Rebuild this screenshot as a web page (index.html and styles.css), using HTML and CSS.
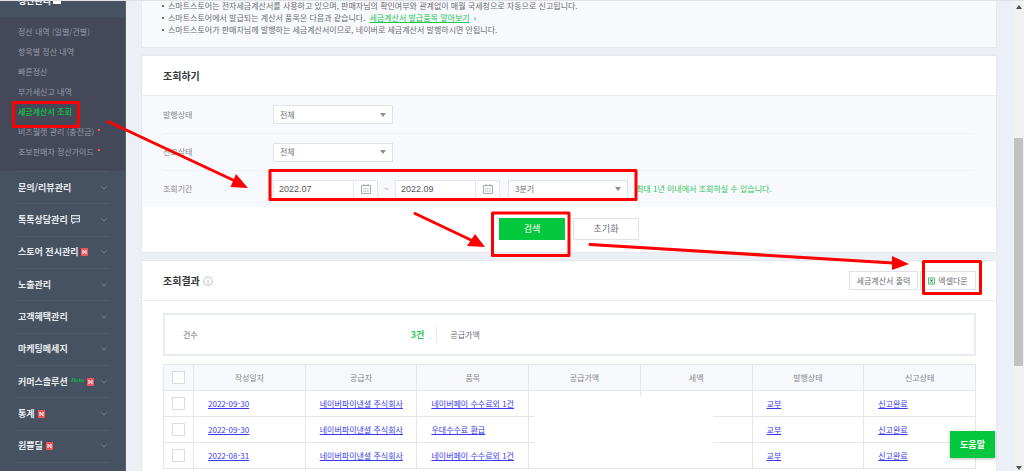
FILE: index.html
```html
<!DOCTYPE html>
<html lang="ko">
<head>
<meta charset="utf-8">
<title>세금계산서 조회</title>
<link rel="stylesheet" href="styles.css">
</head>
<body>
<svg class="symbols" aria-hidden="true">
  <symbol id="chevron" viewBox="0 0 6 4"><path d="M.5 .5 3 3 5.500 .5" fill="none" stroke="#74808e" stroke-width="1"/></symbol>
  <symbol id="new" viewBox="0 0 7 8"><rect width="7" height="8" fill="#f0525b"/><path d="M2 6V2.200L5 5.800V2" fill="none" stroke="#fff" stroke-width="1"/></symbol>
  <symbol id="calendar" viewBox="0 0 10 10"><path d="M.5 1.500h9v8h-9zM3 0v2.500M7 0v2.500" fill="none" stroke="#a9adb3"/><path d="M2 4.500h6M2 6h6M2 7.500h6" stroke="#b9bdc3" stroke-width=".8" stroke-dasharray="1.200 .6"/></symbol>
</svg>
<div class="app">
  <nav class="sidebar">
    <div class="current">정산관리 <span class="mark"></span></div>
    <ul class="submenu">
      <li><a href="#">정산 내역 (일별/건별)</a></li>
      <li><a href="#">항목별 정산 내역</a></li>
      <li><a href="#">빠른정산</a></li>
      <li><a href="#">부가세신고 내역</a></li>
      <li><a href="#" class="active">세금계산서 조회</a></li>
      <li><a href="#">비즈월렛 관리 (충전금)</a><i class="dot"></i></li>
      <li><a href="#">초보판매자 정산가이드</a><i class="dot"></i></li>
    </ul>
    <ul class="menu">
      <li><a href="#">문의/리뷰관리</a><svg class="chevron"><use href="#chevron"/></svg></li>
      <li><a href="#">톡톡상담관리</a><svg class="talk" viewBox="0 0 8 8"><path d="M.5 .5h7v5.500H3.200L1.500 7.500V6h-1zM1 3.200h6" fill="none" stroke="#d5dae0"/></svg><svg class="chevron"><use href="#chevron"/></svg></li>
      <li><a href="#">스토어 전시관리</a><svg class="new"><use href="#new"/></svg><svg class="chevron"><use href="#chevron"/></svg></li>
      <li><a href="#">노출관리</a><svg class="chevron"><use href="#chevron"/></svg></li>
      <li><a href="#">고객혜택관리</a><svg class="chevron"><use href="#chevron"/></svg></li>
      <li><a href="#">마케팅메세지</a><svg class="chevron"><use href="#chevron"/></svg></li>
      <li><a href="#">커머스솔루션</a><span class="beta">Beta</span><svg class="new"><use href="#new"/></svg><svg class="chevron"><use href="#chevron"/></svg></li>
      <li><a href="#">통계</a><svg class="new"><use href="#new"/></svg><svg class="chevron"><use href="#chevron"/></svg></li>
      <li><a href="#">원쁠딜</a><svg class="new"><use href="#new"/></svg><svg class="chevron"><use href="#chevron"/></svg></li>
    </ul>
  </nav>

  <main class="content">
    <section class="panel notice">
      <ul>
        <li>스마트스토어는 전자세금계산서를 사용하고 있으며, 판매자님의 확인여부와 관계없이 매월 국세청으로 자동으로 신고됩니다.</li>
        <li>스마트스토어에서 발급되는 계산서 품목은 다음과 같습니다. <a href="#">세금계산서 발급품목 알아보기</a><b>›</b></li>
        <li>스마트스토어가 판매자님께 발행하는 세금계산서이므로, 네이버로 세금계산서 발행하시면 안됩니다.</li>
      </ul>
    </section>

    <form class="panel">
      <header class="panel-head"><h2>조회하기</h2></header>
      <div class="fields">
        <div class="field">
          <label for="issue">발행상태</label>
          <select id="issue"><option>전체</option></select>
        </div>
        <div class="field">
          <label for="report">신고상태</label>
          <select id="report"><option>전체</option></select>
        </div>
        <div class="field">
          <label for="from">조회기간</label>
          <div class="date"><input id="from" type="text" value="2022.07"><button type="button" aria-label="시작월 선택"><svg><use href="#calendar"/></svg></button></div>
          <span class="tilde">~</span>
          <div class="date"><input type="text" value="2022.09" aria-label="종료월"><button type="button" aria-label="종료월 선택"><svg><use href="#calendar"/></svg></button></div>
          <select class="quarter" aria-label="분기"><option>3분기</option></select>
          <span class="hint">최대 1년 이내에서 조회하실 수 있습니다.</span>
        </div>
      </div>
      <div class="actions">
        <button type="button" class="primary">검색</button>
        <button type="reset">초기화</button>
      </div>
    </form>

    <section class="panel results">
      <header class="panel-head">
        <h2>조회결과</h2>
        <svg class="info" viewBox="0 0 10 10"><circle cx="5" cy="5" r="4.300" fill="none" stroke="#b4b8be" stroke-width=".9"/><path d="M5 2.300v1M5 4.300v3.400" stroke="#b4b8be"/></svg>
        <div class="tools">
          <button type="button">세금계산서 출력</button>
          <button type="button"><svg viewBox="0 0 8 8"><path d="M.5 .5h7v7h-7z" fill="#fff" stroke="#2fae57"/><path d="M2.500 2.300l3 3.500M5.500 2.300l-3 3.500" stroke="#17873c" stroke-width="1.200"/></svg>엑셀다운</button>
        </div>
      </header>
      <div class="results-body">
        <dl class="summary">
          <div><dt>건수</dt><dd>3건</dd></div>
          <div><dt>공급가액</dt><dd></dd></div>
          <div></div>
        </dl>
        <div class="table-wrap">
          <table>
            <thead>
              <tr><th class="check"><input type="checkbox" aria-label="전체 선택"></th><th>작성일자</th><th>공급자</th><th>품목</th><th>공급가액</th><th>세액</th><th>발행상태</th><th>신고상태</th></tr>
            </thead>
            <tbody>
              <tr><td class="check"><input type="checkbox" aria-label="선택"></td><td><a href="#">2022-09-30</a></td><td><a href="#">네이버파이낸셜 주식회사</a></td><td><a href="#">네이버페이 수수료외 1건</a></td><td></td><td></td><td><a href="#">교부</a></td><td><a href="#">신고완료</a></td></tr>
              <tr><td class="check"><input type="checkbox" aria-label="선택"></td><td><a href="#">2022-09-30</a></td><td><a href="#">네이버파이낸셜 주식회사</a></td><td><a href="#">우대수수료 환급</a></td><td></td><td></td><td><a href="#">교부</a></td><td><a href="#">신고완료</a></td></tr>
              <tr><td class="check"><input type="checkbox" aria-label="선택"></td><td><a href="#">2022-08-31</a></td><td><a href="#">네이버파이낸셜 주식회사</a></td><td><a href="#">네이버페이 수수료외 1건</a></td><td></td><td></td><td><a href="#">교부</a></td><td><a href="#">신고완료</a></td></tr>
            </tbody>
          </table>
          <div class="redaction"></div>
        </div>
      </div>
    </section>
  </main>

  <div class="scrollbar" aria-hidden="true">
    <svg viewBox="0 0 6 4"><path d="M0 4 3 0 6 4z" fill="#4a4f57"/></svg>
    <div class="thumb"></div>
    <svg viewBox="0 0 6 4"><path d="M0 0 3 4 6 0z" fill="#4a4f57"/></svg>
  </div>
  <button type="button" class="help">도움말</button>

  <svg class="annotations" viewBox="0 0 1024 471" aria-hidden="true">
    <g fill="none" stroke="#fe0000" stroke-width="3" stroke-linejoin="round" stroke-linecap="round">
      <rect x="13.500" y="102.500" width="65" height="24"/>
      <rect x="270" y="170.500" width="366" height="29"/>
      <rect x="492.500" y="213" width="76.500" height="42.500"/>
      <rect x="923.500" y="261.500" width="57" height="32"/>
      <path d="M108 121.500 235 181M415 213.500 473 241M590 244.500 893 263"/>
    </g>
    <path d="M248 188 236 174 230.500 187zM485 247 475 234 467 246zM909 264 892 256V270z" fill="#fe0000"/>
  </svg>
</div>
</body>
</html>
```
FILE: styles.css
```css
* { box-sizing: border-box; }
body {
  margin: 0;
  font: 8px/12px "Noto Sans CJK KR", "Noto Sans", sans-serif;
  color: #6b6e73;
  background: #eceff6;
}
ul, dl, dd, h2 { margin: 0; padding: 0; list-style: none; }
button, input, select { font: inherit; color: inherit; border-radius: 0; margin: 0; }
.symbols { display: none; }

.app {
  position: relative;
  display: flex;
  height: 100vh;
  overflow: hidden;
  border-top: 1px solid #dfe2e5;
}

/* Sidebar */
.sidebar {
  flex: 0 0 126px;
  display: flex;
  flex-direction: column;
  padding-bottom: 8px;
  background: #465161;
  border-right: 1px solid #596271;
}
.sidebar a { color: inherit; text-decoration: none; }
.current {
  display: flex;
  align-items: center;
  gap: 2px;
  height: 14px;
  padding: 0 18px 16px;
  font-size: 9px;
  font-weight: 700;
  color: #fff;
}
.mark { width: 8px; height: 6px; background: #fff; }
.submenu {
  padding: 5px 18px 9px;
  background: #444859;
  color: #969ba6;
}
.submenu li { display: flex; align-items: center; gap: 4px; height: 20px; }
.sidebar .active { color: #15b541; font-weight: 700; }
.dot { width: 2px; height: 2px; margin-bottom: 4px; background: #ff5b60; }
.menu {
  flex: 1;
  display: flex;
  flex-direction: column;
  margin: 0 15px;
  border-bottom: 1px solid #505b6a;
  color: #e9ecef;
  font-size: 9px;
  font-weight: 700;
}
.menu li {
  flex: 1;
  display: flex;
  align-items: center;
  gap: 3px;
  padding: 0 3px;
  border-top: 1px solid #505b6a;
}
.chevron { width: 6px; height: 4px; margin-left: auto; }
.new { width: 7px; height: 8px; }
.talk { width: 9px; height: 9px; }
.beta { color: #15b541; font: italic 700 7px/8px "Liberation Serif", serif; margin-bottom: 4px; }

/* Content */
.content {
  flex: 1;
  min-width: 0;
  display: flex;
  flex-direction: column;
  gap: 7px;
  padding: 0 16px 0 15px;
}
.panel { flex: none; background: #fff; border: 1px solid #e6e9ee; }
.notice { height: 47px; padding: 0 20px; border-top: 0; background: #f8f9fd; }
.notice li { display: flex; gap: 4px; }
.notice li::before { content: ""; width: 2px; height: 2px; margin-top: 5px; background: #777; }
.notice ul { margin-top: -1px; }
.notice a, .notice b { color: #22c556; }
.panel-head {
  display: flex;
  align-items: center;
  gap: 3px;
  height: 40px;
  padding: 0 20px 0 21px;
  border-bottom: 1px solid #e8eaef;
}
h2 { font-size: 10px; line-height: 16px; font-weight: 700; color: #34373c; }
.fields { padding: 0 21px; background: #f8f9fd; }
.field { display: flex; align-items: center; height: 37px; }
.field + .field { border-top: 1px solid #eff1f5; }
.field label { width: 110px; color: #85888d; }
select {
  width: 120px;
  height: 19px;
  padding: 0 6px;
  appearance: none;
  border: 1px solid #dfe2e9;
  background: #fff url("data:image/svg+xml,%3Csvg xmlns='http://www.w3.org/2000/svg' width='6' height='4'%3E%3Cpath d='M0 0h6L3 4z' fill='%238a8d92'/%3E%3C/svg%3E") no-repeat right 6px center;
}
.date { display: flex; width: 105px; height: 19px; border: 1px solid #e2e5eb; background: #fff; }
.date input {
  flex: 1;
  min-width: 0;
  padding: 0 5px;
  border: 0;
  background: none;
  font: 9px "Liberation Sans", sans-serif;
  color: #555;
}
.date button {
  display: grid;
  place-items: center;
  width: 24px;
  padding: 0;
  border: 0;
  border-left: 1px solid #e2e5eb;
  background: none;
}
.date svg { width: 10px; height: 10px; }
.tilde { width: 17px; text-align: center; }
.quarter { margin-left: 8px; }
.hint { margin-left: 8px; color: #2cc65a; }
.actions { display: flex; justify-content: center; gap: 8px; padding: 11px 0 12px; }
.actions button {
  width: 66px;
  height: 22px;
  padding: 0;
  border: 1px solid #dfe2e8;
  background: #fff;
  font-size: 9px;
}
.actions .primary { border-color: #03c73c; background: #03c73c; color: #fff; }

/* Results */
.info { width: 10px; height: 10px; }
.tools { display: flex; gap: 2px; margin-left: auto; }
.tools button {
  display: flex;
  align-items: center;
  justify-content: center;
  gap: 3px;
  width: 69px;
  height: 19px;
  padding: 0;
  border: 1px solid #dfe2e8;
  background: #fff;
}
.tools button + button { width: 56px; }
.tools svg { width: 7px; height: 8px; }
.results-body { padding: 12px 20px 8px 21px; }
.summary {
  display: flex;
  align-items: center;
  height: 43px;
  margin-bottom: 8px;
  padding: 0 18px;
  border: 2px solid #e8ebf1;
}
.summary div { display: flex; flex: 1; height: 16px; align-items: center; justify-content: space-between; padding-right: 12px; }
.summary div:first-child { flex-grow: 1.03; }
.summary div + div { padding-left: 13px; border-left: 1px solid #e6e8ec; }
.summary div:last-child { border: 0; }
.summary dd { color: #1ec652; font-size: 9px; font-weight: 700; }
.table-wrap { position: relative; }
table { width: 100%; border-collapse: collapse; table-layout: fixed; }
th, td { height: 26px; padding: 0 14px; border: 1px solid #e3e6ec; text-align: left; white-space: nowrap; }
th { background: #f7f8fc; text-align: center; font-weight: 400; color: #85888d; }
.check { width: 30px; padding: 0; text-align: center; }
.check input {
  display: block;
  width: 13px;
  height: 13px;
  margin: 0 auto;
  appearance: none;
  border: 1px solid #d9dce2;
  background: #fff;
}
td a { color: #3a3aee; }
/* Blank patch that hides the amounts */
.redaction { position: absolute; left: 371px; top: 32px; bottom: 1px; width: 179px; background: #fff; }

.scrollbar {
  flex: 0 0 11px;
  display: flex;
  flex-direction: column;
  align-items: center;
  padding: 4px 1px 1px;
  background: #f1f1f1;
}
.scrollbar svg { width: 6px; height: 4px; }
.thumb { width: 100%; height: 49%; margin: 129px 0 auto; background: #c1c1c1; }
.help {
  position: absolute;
  right: 29px;
  bottom: 13px;
  width: 45px;
  height: 27px;
  padding: 0;
  border: 0;
  background: #03c73c;
  color: #fff;
  font-size: 9px;
  font-weight: 700;
  box-shadow: 0 1px 3px #0004;
}
.annotations { position: absolute; left: 0; top: -1px; width: 1024px; height: 471px; pointer-events: none; }
```
